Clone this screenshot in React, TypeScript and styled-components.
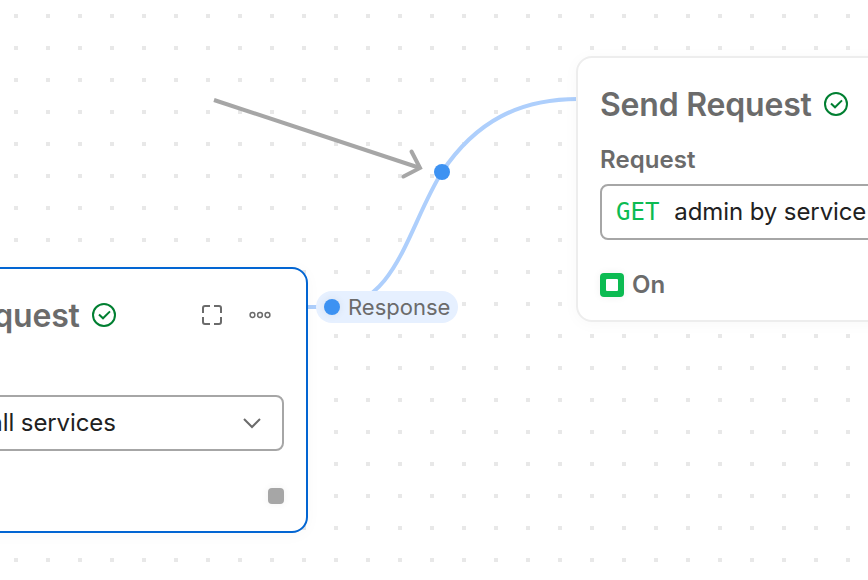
import React from "react";
import styled, { createGlobalStyle } from "styled-components";

const GlobalStyle = createGlobalStyle`
  *, *::before, *::after { box-sizing: border-box; }
  body { margin: 0; overflow: hidden; background: #fff; }
`;

/* Free canvas with a 32px dot grid */
const Canvas = styled.main`
  position: relative;
  width: 868px;
  height: 580px;
  overflow: hidden;
  background: conic-gradient(from 90deg at 28px 28px, #e8e8e8 25%, transparent 0) -14px -14px / 32px 32px #fff;
  font-family: Inter, "Liberation Sans", sans-serif;
  color: #6b6b6b;
`;

const Wires = styled.svg`
  position: absolute;
  inset: 0;
`;

const Node = styled.section<{ $x: number; $y: number; $w: number; $h: number; $selected?: boolean }>`
  position: absolute;
  left: ${(p) => p.$x}px;
  top: ${(p) => p.$y}px;
  width: ${(p) => p.$w}px;
  height: ${(p) => p.$h}px;
  display: flex;
  flex-direction: column;
  padding: 22px;
  background: #fff;
  border: 2px solid ${(p) => (p.$selected ? "#0265d2" : "#ededed")};
  border-radius: 16px;
  box-shadow: 0 2px 16px rgba(0, 0, 0, 0.03);
`;

const Header = styled.header`
  display: flex;
  align-items: center;
  flex: none;
  height: 48px;
`;

const Title = styled.h2`
  margin: 2px 12px 0 0;
  font-size: 32px;
  line-height: 48px;
  font-weight: 600;
  letter-spacing: -0.2px;
  white-space: nowrap;
`;

const Actions = styled.div`
  display: flex;
  gap: 24px;
  margin-left: auto;
  padding-right: 12px;
`;

const Label = styled.div`
  flex: none;
  height: 32px;
  margin-top: 16px;
  font-size: 24px;
  line-height: 32px;
  font-weight: 600;
  letter-spacing: 0.05px;
`;

const Field = styled.div<{ $inset?: number }>`
  display: flex;
  align-items: center;
  flex: none;
  height: 56px;
  margin-top: 8px;
  padding: 0 18px 0 ${(p) => p.$inset ?? 14}px;
  border: 2px solid #a6a6a6;
  border-radius: 8px;
  color: #212121;
  font-size: 24px;
  white-space: nowrap;
`;

const Method = styled.span`
  margin-right: 15px;
  color: #0cbb52;
  font-family: "DejaVu Sans Mono", monospace;
  font-size: 24px;
`;

const Value = styled.span`
  flex: 1;
  padding-bottom: 2px;
  letter-spacing: -0.1px;
`;

const Footer = styled.footer<{ $end?: boolean }>`
  display: flex;
  flex: none;
  align-items: center;
  justify-content: ${(p) => (p.$end ? "flex-end" : "flex-start")};
  gap: 8px;
  height: 32px;
  margin-top: 29px;
  font-size: 24px;
  font-weight: 600;
`;

const PortLabel = styled.span`
  padding-bottom: 1px;
`;

const OnPort = styled.span`
  display: grid;
  place-items: center;
  width: 24px;
  height: 24px;
  border-radius: 4px;
  background: #0cbb52;
  box-shadow: 0 0 8px rgba(0, 0, 0, 0.06);

  &::before {
    content: "";
    width: 12px;
    height: 12px;
    border-radius: 1px;
    background: #fff;
  }
`;

const IdlePort = styled.span`
  width: 16px;
  height: 16px;
  border-radius: 4px;
  background: #a6a6a6;
  box-shadow: 0 0 8px rgba(0, 0, 0, 0.06);
`;

const ResponsePort = styled.div`
  position: absolute;
  left: 316px;
  top: 291px;
  width: 142px;
  height: 32px;
  display: flex;
  align-items: center;
  gap: 8px;
  padding-left: 8px;
  border-radius: 16px;
  background: #e6f0ff;
  font-size: 22px;
`;

const Dot = styled.span`
  width: 16px;
  height: 16px;
  border-radius: 50%;
  background: #3d92f2;
  box-shadow: 0 0 8px rgba(0, 0, 0, 0.07);
`;

const Success = () => (
  <svg width="24" height="24" viewBox="0 0 24 24" fill="none" stroke="#007f31" strokeWidth="2">
    <circle cx="12" cy="12" r="11" />
    <path d="M7 11.5 L11 15.3 L18 8.4" />
  </svg>
);

const Expand = () => (
  <svg width="24" height="24" viewBox="0 0 24 24" fill="none" stroke="#6b6b6b" strokeWidth="2">
    <path d="M3 10V5Q3 3 5 3H10M14 3H19Q21 3 21 5V10M21 14V19Q21 21 19 21H14M10 21H5Q3 21 3 19V14" />
  </svg>
);

const More = () => (
  <svg width="24" height="24" viewBox="0 0 24 24" fill="none" stroke="#6b6b6b" strokeWidth="1.5">
    <circle cx="4.5" cy="12" r="2.4" />
    <circle cx="12" cy="12" r="2.4" />
    <circle cx="19.5" cy="12" r="2.4" />
  </svg>
);

const Chevron = () => (
  <svg width="24" height="24" viewBox="0 0 24 24" fill="none" stroke="#6b6b6b" strokeWidth="2">
    <path d="M4 8L12 16L20 8" />
  </svg>
);

export default function App() {
  return (
    <>
      <GlobalStyle />
      <Canvas>
        <Wires width="868" height="580" fill="none">
          <path d="M306 307H332C396 307 408 226 442 172C476 121 520 99 578 99" stroke="#aecffc" strokeWidth="4" />
          <circle cx="442" cy="172" r="8" fill="#3d92f2" />
          <path d="M214 100L420 168" stroke="#a6a6a6" strokeWidth="4" />
          <path d="M411.5 151.5L420 168L403.5 176.5" stroke="#a6a6a6" strokeWidth="4" strokeLinecap="round" />
        </Wires>
        <Node $x={-156} $y={267} $w={464} $h={266} $selected>
          <Header>
            <Title>Send Request</Title>
            <Success />
            <Actions>
              <Expand />
              <More />
            </Actions>
          </Header>
          <Label />
          <Field $inset={61}>
            <Method>GET</Method>
            <Value>all services</Value>
            <Chevron />
          </Field>
          <Footer $end>
            <IdlePort />
          </Footer>
        </Node>
        <ResponsePort>
          <Dot />
          Response
        </ResponsePort>
        <Node $x={576} $y={56} $w={400} $h={266}>
          <Header>
            <Title>Send Request</Title>
            <Success />
          </Header>
          <Label>Request</Label>
          <Field>
            <Method>GET</Method>
            <Value>admin by service</Value>
          </Field>
          <Footer>
            <OnPort />
            <PortLabel>On</PortLabel>
          </Footer>
        </Node>
      </Canvas>
    </>
  );
}
